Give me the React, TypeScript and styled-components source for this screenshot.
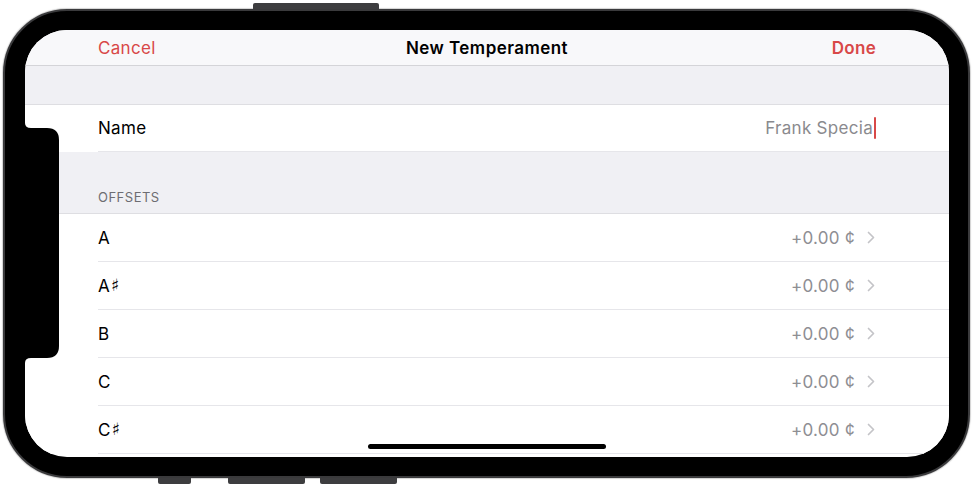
import styled, {createGlobalStyle} from 'styled-components';

const GlobalStyle = createGlobalStyle`
  html, body {
    margin: 0;
    padding: 0;
    background: #ffffff;
  }
  body {
    font-family: Inter, 'Liberation Sans', 'DejaVu Sans', sans-serif;
    -webkit-font-smoothing: antialiased;
  }
`;

const Page = styled.div`
  width: 974px;
  height: 492px;
  padding: 9px 0 0 3px;
  box-sizing: border-box;
`;

const Device = styled.div`
  position: relative;
  width: 967px;
  height: 469px;
  box-sizing: border-box;
  padding: 19px 19px 19px 20px;
  background: #000;
  border: 2px solid #3a3a3c;
  border-radius: 64px;
  box-shadow: 0 0 1px 1px rgba(0, 0, 0, 0.18);
`;

const SideButton = styled.div<{$left: number; $width: number; $top?: boolean}>`
  position: absolute;
  left: ${p => p.$left}px;
  width: ${p => p.$width}px;
  height: 6px;
  background: #3d3d3f;
  ${p => (p.$top ? 'top: -8px; border-radius: 2px 2px 0 0;' : 'bottom: -8px; border-radius: 0 0 2px 2px;')}
`;

const Screen = styled.div`
  position: relative;
  width: 924px;
  height: 427px;
  overflow: hidden;
  border-radius: 42px;
  background: #fff;
`;

const Notch = styled.svg`
  position: absolute;
  left: 0;
  top: 93px;
  width: 34px;
  height: 240px;
  z-index: 3;
`;

const NavBar = styled.div`
  display: grid;
  grid-template-columns: 1fr auto 1fr;
  align-items: center;
  height: 35px;
  padding: 0 73px;
  background: #f8f8fa;
  border-bottom: 1px solid #d4d4d8;
  font-size: 17px;
  letter-spacing: 0.3px;
`;

const NavButton = styled.span<{$bold?: boolean}>`
  color: #d84848;
  font-weight: ${p => (p.$bold ? 600 : 400)};
  justify-self: ${p => (p.$bold ? 'end' : 'start')};
`;

const NavTitle = styled.span`
  color: #000;
  font-weight: 600;
  letter-spacing: 0.45px;
`;

const Spacer = styled.div<{$h: number}>`
  height: ${p => p.$h}px;
  background: #f0f0f4;
`;

const Group = styled.div`
  background: #fff;
  border-top: 1px solid #dedee2;
`;

const Cell = styled.div<{$h: number}>`
  margin-left: 73px;
  height: ${p => p.$h}px;
  box-sizing: border-box;
  padding-right: 73px;
  display: flex;
  align-items: center;
  justify-content: space-between;
  border-bottom: 1px solid #e6e6ea;
  font-size: 17px;
  letter-spacing: 0.3px;
`;

const Label = styled.span`
  display: flex;
  align-items: flex-start;
  color: #000;
`;

const Sharp = styled.span`
  font-family: 'DejaVu Sans', sans-serif;
  font-size: 17px;
  font-weight: 700;
  line-height: 1;
  margin: 1px 0 0 1px;
`;

const Field = styled.span`
  display: flex;
  align-items: center;
  color: #8a8a8e;
`;

const Caret = styled.span`
  width: 2px;
  height: 22px;
  margin-left: 1px;
  background: #d84848;
  border-radius: 1px;
`;

const Detail = styled.span`
  display: flex;
  align-items: center;
  gap: 12px;
  color: #8e8e93;
  margin-right: 1px;
`;

const SectionHeader = styled.div`
  height: 61px;
  box-sizing: border-box;
  display: flex;
  align-items: flex-end;
  padding: 0 73px 8px;
  background: #f0f0f4;
  font-size: 13px;
  line-height: 16px;
  letter-spacing: 0.5px;
  color: #6d6d72;
`;

const HomeIndicator = styled.div`
  position: absolute;
  left: 50%;
  bottom: 8px;
  width: 238px;
  height: 5px;
  margin-left: -119px;
  border-radius: 3px;
  background: #000;
  z-index: 3;
`;

const notes = ['A', 'A#', 'B', 'C', 'C#'];

function Chevron() {
  return (
    <svg width="8" height="13" viewBox="0 0 8 13">
      <path
        d="M1.5 1.5 L6.5 6.5 L1.5 11.5"
        fill="none"
        stroke="#c4c4c8"
        strokeWidth="1.7"
        strokeLinecap="round"
        strokeLinejoin="round"
      />
    </svg>
  );
}

function NoteLabel({note}: {note: string}) {
  const sharp = note.endsWith('#');
  return (
    <Label>
      {note[0]}
      {sharp && <Sharp>♯</Sharp>}
    </Label>
  );
}

export default function App() {
  return (
    <Page>
      <GlobalStyle />
      <Device>
        <SideButton $top $left={248} $width={126} />
        <SideButton $left={153} $width={33} />
        <SideButton $left={223} $width={77} />
        <SideButton $left={315} $width={77} />
        <Screen>
          <Notch viewBox="0 0 34 240">
            <path
              d="M0 0 Q0 5 6 5 L22 5 Q34 5 34 17 L34 223 Q34 235 22 235 L6 235 Q0 235 0 240 Z"
              fill="#000"
            />
          </Notch>
          <NavBar>
            <NavButton>Cancel</NavButton>
            <NavTitle>New Temperament</NavTitle>
            <NavButton $bold>Done</NavButton>
          </NavBar>
          <Spacer $h={38} />
          <Group>
            <Cell $h={47}>
              <Label>Name</Label>
              <Field>
                Frank Specia
                <Caret />
              </Field>
            </Cell>
          </Group>
          <SectionHeader>OFFSETS</SectionHeader>
          <Group>
            {notes.map(n => (
              <Cell $h={48} key={n}>
                <NoteLabel note={n} />
                <Detail>
                  +0.00 ¢
                  <Chevron />
                </Detail>
              </Cell>
            ))}
          </Group>
          <HomeIndicator />
        </Screen>
      </Device>
    </Page>
  );
}
